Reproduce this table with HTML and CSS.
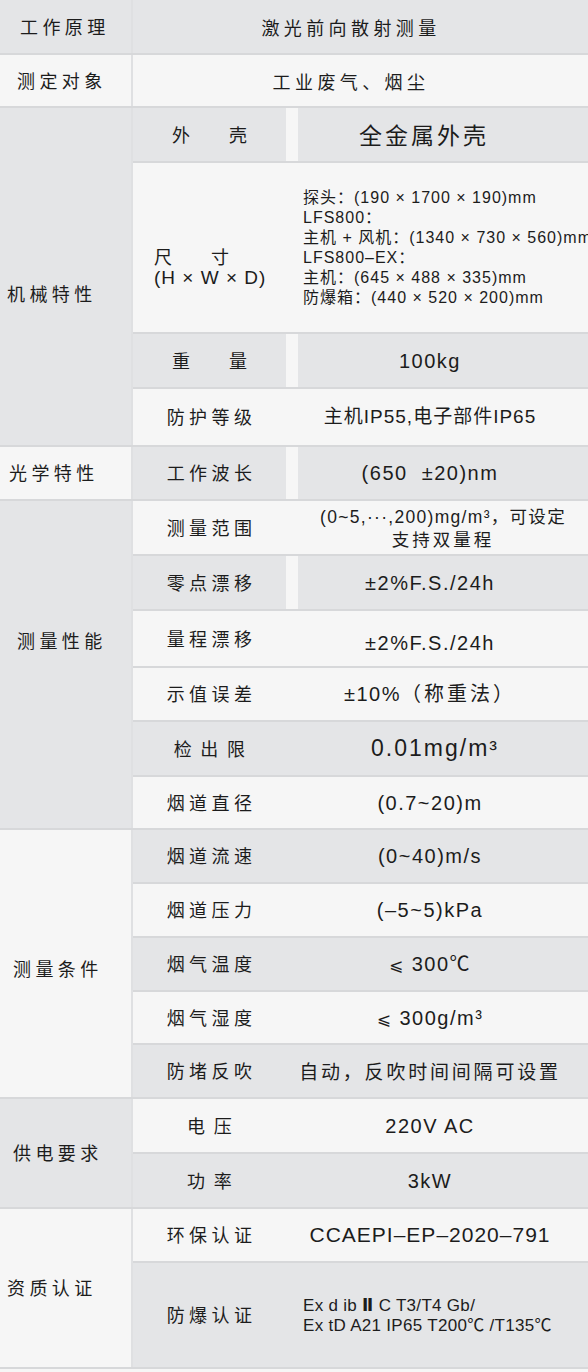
FILE: index.html
```html
<!DOCTYPE html>
<html lang="zh-CN">
<head>
<meta charset="utf-8">
<title>技术参数</title>
<link rel="stylesheet" href="styles.css">
</head>
<body>
<div class="spec">
  <div class="grp bg-g h53">
    <div class="lab in20">工作原理</div>
    <div class="merged">激光前向散射测量</div>
  </div>
  <div class="grp h51">
    <div class="lab in17">测定对象</div>
    <div class="merged">工业废气、烟尘</div>
  </div>

  <div class="grp">
    <div class="lab bg-g in7 low">机械特性</div>
    <div class="rows">
      <div class="row g split h53"><div class="k two">外　　壳</div><div class="gap"></div><div class="v cn big">全金属外壳</div></div>
      <div class="row h169"><div class="k size"><span class="size-cn">尺　　寸</span><span class="size-en">(H × W × D)</span></div><div class="gap"></div><div class="v detail"><span>探头：(190 × 1700 × 190)mm<br>LFS800：<br>主机 + 风机：(1340 × 730 × 560)mm<br>LFS800–EX：<br>主机：(645 × 488 × 335)mm<br>防爆箱：(440 × 520 × 200)mm</span></div></div>
      <div class="row g split h53"><div class="k two">重　　量</div><div class="gap"></div><div class="v">100kg</div></div>
      <div class="row h56"><div class="k">防护等级</div><div class="gap"></div><div class="v mix">主机IP55,电子部件IP65</div></div>
    </div>
  </div>

  <div class="grp">
    <div class="lab in9">光学特性</div>
    <div class="rows">
      <div class="row g split h52"><div class="k">工作波长</div><div class="gap"></div><div class="v">(650&nbsp;&nbsp;±20)nm</div></div>
    </div>
  </div>

  <div class="grp">
    <div class="lab bg-g in17 high">测量性能</div>
    <div class="rows">
      <div class="row h53"><div class="k">测量范围</div><div class="gap"></div><div class="v range"><span>(0~5,···,200)mg/m³，可设定</span><span class="range-2">支持双量程</span></div></div>
      <div class="row g split h53"><div class="k">零点漂移</div><div class="gap"></div><div class="v">±2%F.S./24h</div></div>
      <div class="row h55"><div class="k">量程漂移</div><div class="gap"></div><div class="v drop">±2%F.S./24h</div></div>
      <div class="row h52"><div class="k">示值误差</div><div class="gap"></div><div class="v"><span>±10%<span class="cnw">（称重法）</span></span></div></div>
      <div class="row g h53"><div class="k three">检 出 限</div><div class="gap"></div><div class="v lod">0.01mg/m³</div></div>
      <div class="row h51"><div class="k">烟道直径</div><div class="gap"></div><div class="v">(0.7~20)m</div></div>
    </div>
  </div>

  <div class="grp">
    <div class="lab in13 mid">测量条件</div>
    <div class="rows">
      <div class="row g h52"><div class="k">烟道流速</div><div class="gap"></div><div class="v">(0~40)m/s</div></div>
      <div class="row h52"><div class="k">烟道压力</div><div class="gap"></div><div class="v">(–5~5)kPa</div></div>
      <div class="row g h52"><div class="k">烟气温度</div><div class="gap"></div><div class="v"><span><span class="le">⩽</span>&nbsp;300℃</span></div></div>
      <div class="row h51"><div class="k">烟气湿度</div><div class="gap"></div><div class="v"><span><span class="le">⩽</span>&nbsp;300g/m³</span></div></div>
      <div class="row g h52"><div class="k">防堵反吹</div><div class="gap"></div><div class="v cn auto">自动，反吹时间间隔可设置</div></div>
    </div>
  </div>

  <div class="grp">
    <div class="lab bg-g in13">供电要求</div>
    <div class="rows">
      <div class="row h53"><div class="k three">电 压</div><div class="gap"></div><div class="v">220V AC</div></div>
      <div class="row g h53"><div class="k three">功 率</div><div class="gap"></div><div class="v">3kW</div></div>
    </div>
  </div>

  <div class="grp">
    <div class="lab in7">资质认证</div>
    <div class="rows">
      <div class="row h52"><div class="k">环保认证</div><div class="gap"></div><div class="v cert">CCAEPI–EP–2020–791</div></div>
      <div class="row g h104"><div class="k">防爆认证</div><div class="gap"></div><div class="v ex"><span>Ex d ib <b class="two-bar">Ⅱ</b> C T3/T4 Gb/<br>Ex tD A21 IP65 T200℃ /T135℃</span></div></div>
    </div>
  </div>
</div>
</body>
</html>
```

FILE: styles.css
```css
* {
  margin: 0;
  padding: 0;
  box-sizing: border-box;
}

html,
body {
  background: #f6f6f6;
}

body {
  width: 588px;
  overflow: hidden;
  font-family: "Liberation Sans", "Noto Sans CJK SC", sans-serif;
  color: #1c1c1c;
}

.spec {
  display: flex;
  flex-direction: column;
}

.grp {
  display: flex;
  box-sizing: content-box;
  border-bottom: 2px solid #d7d8da;
}

.bg-g {
  background: #e4e5e7;
}

.lab {
  width: 133px;
  flex: none;
  display: flex;
  align-items: center;
  border-right: 2px solid #dfe0e2;
  font-family: "Noto Sans CJK SC", sans-serif;
  font-size: 18px;
  letter-spacing: 4.4px;
  line-height: 1.2;
}

.in7 { padding-left: 7px; }
.in9 { padding-left: 9px; }
.in13 { padding-left: 13px; }
.in17 { padding-left: 17px; }
.in20 { padding-left: 20px; }

.low { padding-top: 34px; }
.high { padding-bottom: 48px; }
.mid { padding-top: 10px; }

.merged {
  flex: 1;
  display: flex;
  align-items: center;
  justify-content: center;
  padding-right: 19px;
  font-family: "Noto Sans CJK SC", sans-serif;
  font-size: 18px;
  letter-spacing: 4.4px;
}

.rows {
  flex: 1;
  min-width: 0;
  display: flex;
  flex-direction: column;
}

.row {
  display: flex;
  box-sizing: content-box;
  border-bottom: 2px solid #d7d8da;
}

.row:last-child {
  border-bottom: 0;
}

.row.g {
  background: #e4e5e7;
}

.row.split .gap {
  background: #f6f6f6;
}

.h51 { height: 51px; }
.h52 { height: 52px; }
.h53 { height: 53px; }
.h55 { height: 55px; }
.h56 { height: 56px; }
.h104 { height: 104px; }
.h169 { height: 169px; }

.k {
  width: 153px;
  flex: none;
  display: flex;
  align-items: center;
  justify-content: center;
  padding-left: 4px;
  font-family: "Noto Sans CJK SC", sans-serif;
  font-size: 18px;
  letter-spacing: 4.4px;
  line-height: 1.2;
}

.k.two {
  letter-spacing: 1px;
  padding-left: 1px;
}

.k.three {
  letter-spacing: 2.3px;
  padding-left: 2px;
}

.k.size {
  flex-direction: column;
  align-items: flex-start;
  justify-content: center;
  padding: 38px 0 0 21px;
  letter-spacing: 1px;
  line-height: 22px;
}

.size-en {
  font-family: "Liberation Sans", sans-serif;
  font-size: 19px;
  letter-spacing: 1px;
}

.gap {
  width: 12px;
  flex: none;
}

.v {
  flex: 1;
  min-width: 0;
  display: flex;
  align-items: center;
  justify-content: center;
  padding-right: 26px;
  overflow: hidden;
  white-space: nowrap;
  font-size: 20px;
  letter-spacing: 1.5px;
  line-height: 1.2;
}

.v.drop {
  padding-top: 8px;
}

.v.cn {
  font-family: "Noto Sans CJK SC", sans-serif;
  font-size: 18px;
  letter-spacing: 4.4px;
}

.v.big {
  font-size: 23px;
  letter-spacing: 3px;
  padding-right: 38px;
}

.v.auto {
  font-size: 19px;
  letter-spacing: 2.8px;
  padding-right: 26px;
}

.v.mix {
  font-size: 19px;
  letter-spacing: 1px;
}

.cnw {
  letter-spacing: 3px;
}

.v.detail {
  justify-content: flex-start;
  padding: 0 0 0 5px;
  font-size: 16px;
  letter-spacing: 1px;
  line-height: 20px;
}

.v.range {
  flex-direction: column;
  padding-right: 0;
  font-size: 17.5px;
  letter-spacing: 1.3px;
  line-height: 22px;
}

.range-2 {
  font-family: "Noto Sans CJK SC", sans-serif;
  letter-spacing: 3px;
}

.v.lod {
  font-size: 23px;
  letter-spacing: 2px;
  padding-right: 16px;
}

.le {
  font-family: "DejaVu Sans", sans-serif;
  font-size: 17px;
}

.v.cert {
  font-size: 21px;
  letter-spacing: 1px;
}

.v.ex {
  justify-content: flex-start;
  padding: 0 0 0 5px;
  font-size: 17px;
  letter-spacing: 0.3px;
  line-height: 20px;
}

.two-bar {
  font-family: "DejaVu Sans", sans-serif;
  font-weight: bold;
}
```
